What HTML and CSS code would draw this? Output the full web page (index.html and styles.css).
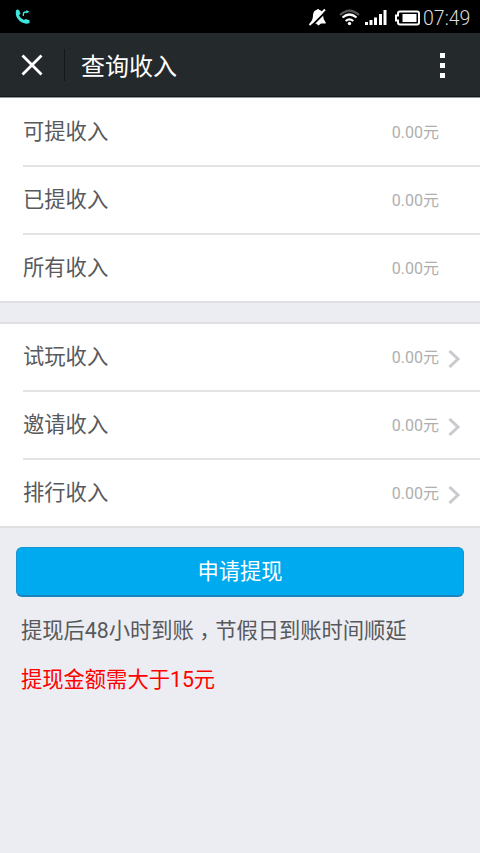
FILE: index.html
```html
<!DOCTYPE html>
<html lang="zh-CN">
<head>
<meta charset="utf-8">
<title>查询收入</title>
<link rel="stylesheet" href="styles.css">
</head>
<body>
<div class="status">
  <svg class="call" width="16" height="16" viewBox="0 0 16 16"><path fill="#3ee6dc" d="M1 1.500Q2.500 0 4 1L5.500 4.500L4 6.500Q5.500 9.500 9 11L10.500 10L14.500 11.200V14Q11 15.500 7 13.500Q-.5 9 1 1.500Z"/><path d="M8.300 7V5.500Q8.300 3 10.500 3H12" fill="none" stroke="#3ee6dc" stroke-width="1.300"/><path d="M11.300 1L14.500 2.700L11.300 4.600Z" fill="#3ee6dc"/></svg>
  <svg class="icons" width="116" height="24" viewBox="306 5 116 24">
    <path fill="#fff" d="M310.500 22.500Q313 20 313 15Q313.500 10.500 316.500 10Q318 8.200 319.500 10Q322.500 10.500 323 15Q323 19.500 325.700 22.500V23.500H310.500ZM316 23.500H321L318.500 25.500Z"/>
    <path d="M310.500 27L327 10.500" stroke="#000" stroke-width="1.800"/><path d="M309.500 25L325 9.500" stroke="#fff" stroke-width="2"/>
    <g fill="none" stroke-width="2.200"><path stroke="#555" d="M340 15Q349.500 6.500 359 15"/><path stroke="#fff" d="M342.500 17.500Q349.500 11.500 356.500 17.500M345.700 21Q349.500 17.800 353.300 21"/></g><circle cx="349.500" cy="23.500" r="1.700" fill="#fff"/>
    <path fill="#fff" d="M365 22h3v3h-3zM369.500 20h3v5h-3zM374 17.500h3v7.500h-3zM379 14h3v11h-3zM383.500 10h3v15h-3z"/>
    <path d="M400 11.500H417Q419 11.500 419 13.500V22.500Q419 24.500 417 24.500H400Q398 24.500 398 22.500V20.500H396V15.500H398V13.500Q398 11.500 400 11.500Z" fill="none" stroke="#fff" stroke-width="2"/><path fill="#fff" d="M402.500 14h14v8h-14z"/>
  </svg>
  <span class="clock">07:49</span>
</div>
<header class="header">
  <svg class="close" width="22" height="22" viewBox="0 0 22 22"><path d="M1.500 1.500L20.500 20.500M20.500 1.500L1.500 20.500" stroke="#fff" stroke-width="2.800"/></svg>
  <h1 class="title">查询收入</h1>
  <div class="more"><i></i><i></i><i></i></div>
</header>
<main>
  <section class="list">
    <div class="row"><span>可提收入</span><span class="value">0.00元</span></div>
    <div class="row"><span>已提收入</span><span class="value">0.00元</span></div>
    <div class="row"><span>所有收入</span><span class="value">0.00元</span></div>
  </section>
  <section class="list links">
    <div class="row"><span>试玩收入</span><span class="value">0.00元</span><svg class="arrow" width="14" height="20" viewBox="0 0 14 20"><path d="M1.500 2L10 10L1.500 18"/></svg></div>
    <div class="row"><span>邀请收入</span><span class="value">0.00元</span><svg class="arrow" width="14" height="20" viewBox="0 0 14 20"><path d="M1.500 2L10 10L1.500 18"/></svg></div>
    <div class="row"><span>排行收入</span><span class="value">0.00元</span><svg class="arrow" width="14" height="20" viewBox="0 0 14 20"><path d="M1.500 2L10 10L1.500 18"/></svg></div>
  </section>
  <button class="apply">申请提现</button>
  <p class="note">提现后48小时到账<span class="comma" lang="zh-TW">，</span>节假日到账时间顺延</p>
  <p class="note warning">提现金额需大于15元</p>
</main>
</body>
</html>
```
FILE: styles.css
```css
* { box-sizing: border-box; }
body {
  margin: 0;
  min-height: 853px;
  background: #ecedf2;
  color: #58595c;
  font: 21.3px/30px Roboto, "Noto Sans CJK SC", sans-serif;
}
svg { display: block; flex: none; }
.status {
  display: flex;
  height: 33px;
  padding: 5px 8px 0 15px;
  background: #000;
  color: #ddd;
}
.call { margin-top: 4px; }
.icons { margin-left: auto; }
.clock { width: 50px; padding-left: 1px; font: 300 19.5px/28px Roboto, sans-serif; white-space: nowrap; }
.header {
  display: flex;
  align-items: center;
  height: 65px;
  padding: 0 35px 0 21px;
  background: #24292c;
  border-bottom: 1px solid #94989a;
  box-shadow: inset 0 -1px #15191b;
  color: #fff;
}
.title {
  display: flex;
  align-items: center;
  height: 32px;
  margin: 0 0 0 21px;
  padding: 4px 0 0 16px;
  border-left: 1px solid #14181a;
  font-size: 24px;
  font-weight: 400;
}
.more { display: grid; gap: 5px; margin-left: auto; }
.more i { width: 5px; height: 5px; background: #fff; }
.list {
  padding-left: 23px;
  background: #fff;
  border-bottom: 2px solid #e0e0e3;
}
.row {
  display: flex;
  align-items: center;
  height: 68px;
  padding-right: 41px;
  border-bottom: 2px solid #e4e4e5;
}
.row:last-child { height: 66px; border-bottom: 0; }
.list:first-child .row:first-child { height: 69px; }
.value { margin-left: auto; padding-top: 2px; color: #afafaf; font-size: 16px; }
.links { margin-top: 19px; border-top: 2px solid #e0e0e3; }
.links .row { padding-right: 18px; }
.arrow { margin: 3px 0 0 9px; fill: none; stroke: #c9cace; stroke-width: 3; }
.apply {
  display: block;
  width: 448px;
  height: 50px;
  margin: 19px 16px;
  padding: 0;
  border: 1px solid #1795d2;
  border-bottom: 2px solid #1b83bd;
  border-radius: 6px;
  background: #00aaee;
  color: #fff;
  font: inherit;
}
.note { margin: 0 0 19px 21px; white-space: nowrap; letter-spacing: -0.02px; }
.comma {
  position: relative;
  top: 6px;
  font-family: "Noto Sans CJK TC", sans-serif;
  line-height: 1;
}
.warning { color: #f00; }
```
